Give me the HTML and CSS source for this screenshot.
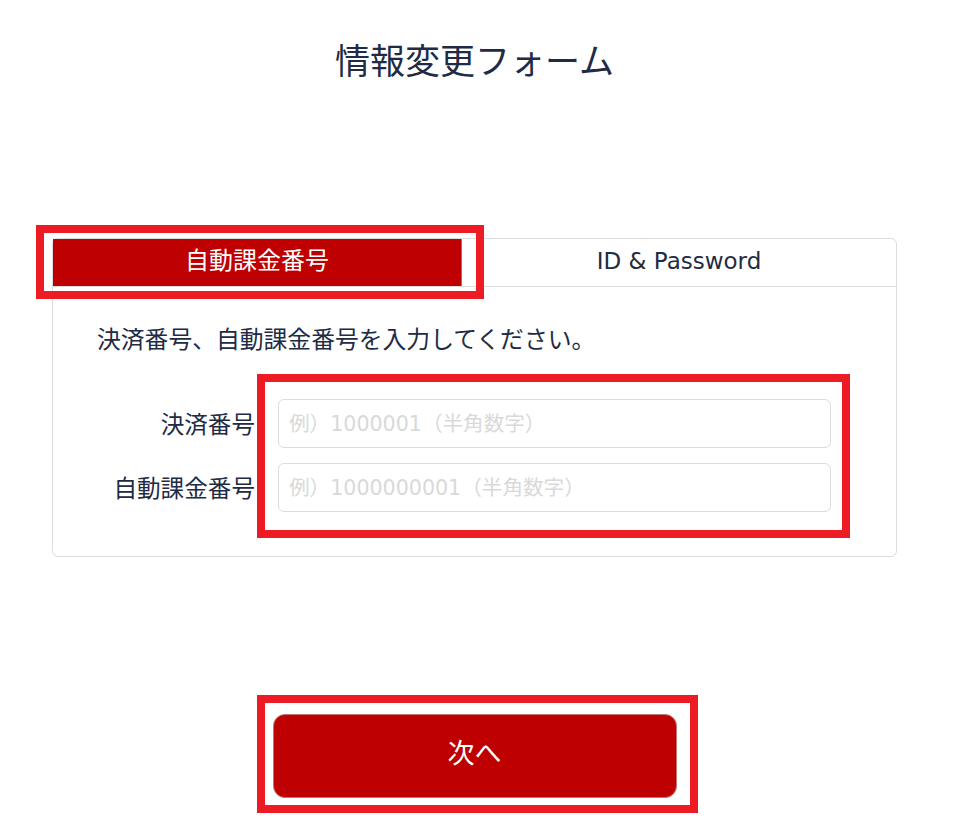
FILE: index.html
```html
<!DOCTYPE html>
<html lang="ja">
<head>
<meta charset="utf-8">
<title>情報変更フォーム</title>
<link rel="stylesheet" href="styles.css">
</head>
<body>
<div class="page">
  <h1 class="title">情報変更フォーム</h1>
  <div class="card">
    <div class="tabs">
      <div class="tab tab-active">自動課金番号</div>
      <div class="tab">ID &amp; Password</div>
    </div>
    <div class="card-body">
      <p class="desc">決済番号、自動課金番号を入力してください。</p>
      <div class="row">
        <label class="label">決済番号</label>
        <input class="input" type="text" placeholder="例）1000001（半角数字）">
      </div>
      <div class="row">
        <label class="label">自動課金番号</label>
        <input class="input" type="text" placeholder="例）1000000001（半角数字）">
      </div>
    </div>
  </div>
  <div class="actions">
    <button class="btn" type="button">次へ</button>
  </div>
</div>
<div class="mark mark-tab"></div>
<div class="mark mark-inputs"></div>
<div class="mark mark-btn"></div>
</body>
</html>
```
FILE: styles.css
```css
html, body {
  margin: 0;
  padding: 0;
  background: #ffffff;
}
body {
  position: relative;
  width: 960px;
  height: 840px;
  overflow: hidden;
  font-family: "DejaVu Sans", "Noto Sans CJK JP", sans-serif;
  color: #222b45;
}
.page {
  width: 845px;
  margin-left: 52px;
  padding-top: 33px;
}
.title {
  margin: 0;
  text-align: center;
  font-family: "Noto Sans CJK JP", sans-serif;
  font-weight: 400;
  font-size: 35px;
  line-height: 52px;
  color: #222b45;
}
.card {
  margin-top: 153px;
  border: 1px solid #dcdcdc;
  border-radius: 6px;
}
.tabs {
  display: flex;
  height: 47px;
  border-bottom: 1px solid #dcdcdc;
}
.tab {
  display: flex;
  align-items: center;
  justify-content: center;
  box-sizing: border-box;
  padding-bottom: 3px;
  font-size: 23px;
  color: #222b45;
}
.tab-active {
  width: 409px;
  padding-bottom: 8px;
  background: #be0000;
  color: #ffffff;
  border-right: 1px solid #b36a6a;
  font-family: "Noto Sans CJK JP", sans-serif;
  font-size: 24px;
}
.tab:last-child {
  flex: 1;
}
.card-body {
  padding: 34px 65px 44px 44px;
}
.desc {
  margin: 0 0 44px;
  font-family: "Noto Sans CJK JP", sans-serif;
  font-size: 23.8px;
  line-height: 34px;
  color: #222b45;
}
.row {
  display: flex;
  align-items: center;
  margin-bottom: 15px;
}
.row:last-child {
  margin-bottom: 0;
}
.label {
  width: 158px;
  margin-right: 23px;
  padding-bottom: 2px;
  text-align: right;
  font-family: "Noto Sans CJK JP", sans-serif;
  font-size: 23.6px;
  color: #222b45;
}
.input {
  flex: 1;
  height: 49px;
  box-sizing: border-box;
  border: 1px solid #dcdcdc;
  border-radius: 6px;
  padding: 0 10px;
  font-family: "DejaVu Sans", "Noto Sans CJK JP", sans-serif;
  font-size: 20.6px;
  color: #222b45;
  background: #ffffff;
  outline: none;
}
.input::placeholder {
  color: #d9d9d9;
}
.actions {
  display: flex;
  justify-content: center;
  margin-top: 157px;
}
.btn {
  width: 404px;
  height: 84px;
  padding: 0 0 9px;
  border: 1px solid #c27676;
  border-radius: 12px;
  background: #be0000;
  color: #ffffff;
  font-family: "Noto Sans CJK JP", sans-serif;
  font-size: 27px;
  cursor: pointer;
}
.mark {
  position: absolute;
  box-sizing: border-box;
  border: 8px solid #ed1c24;
  pointer-events: none;
}
.mark-tab {
  left: 36px;
  top: 225px;
  width: 448px;
  height: 74px;
}
.mark-inputs {
  left: 257px;
  top: 374px;
  width: 593px;
  height: 164px;
}
.mark-btn {
  left: 257px;
  top: 695px;
  width: 441px;
  height: 118px;
}
```
